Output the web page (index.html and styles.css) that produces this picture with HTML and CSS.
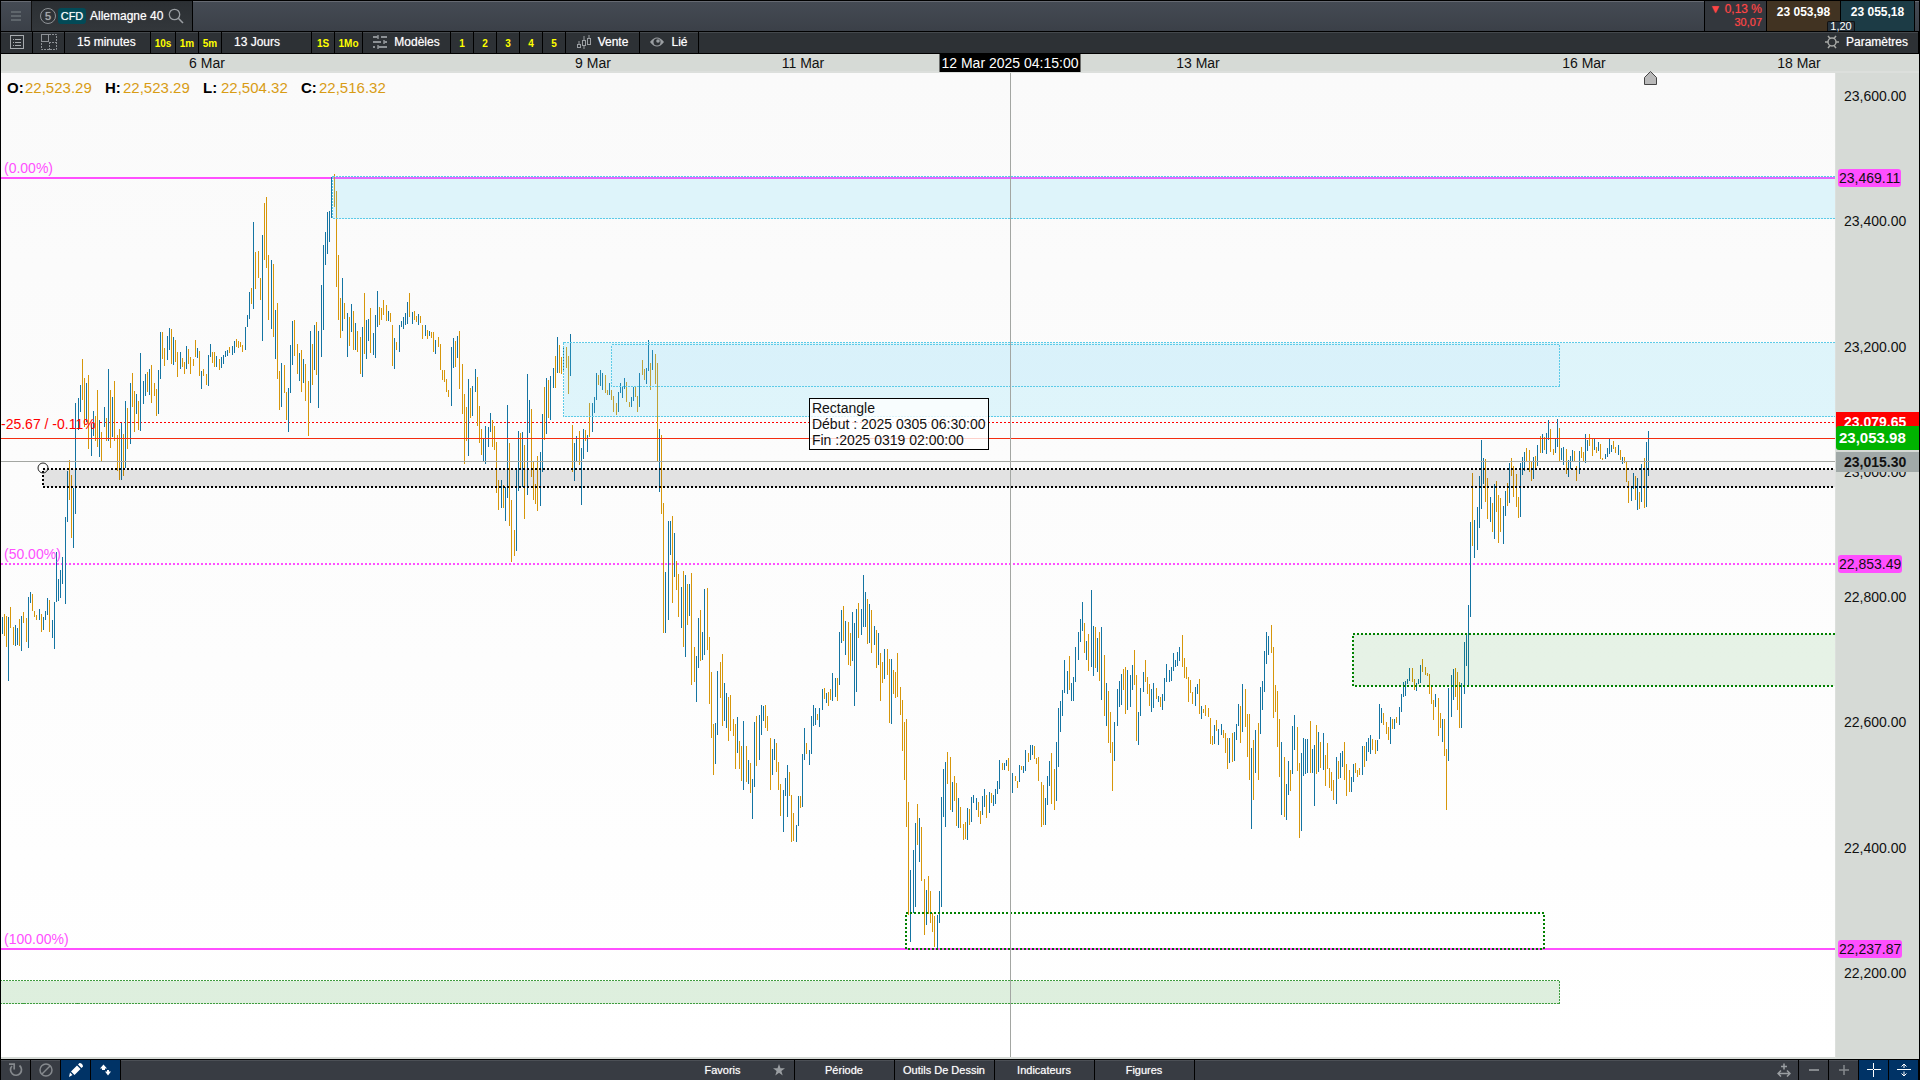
FILE: index.html
```html
<!DOCTYPE html>
<html lang="fr">
<head>
  <meta charset="UTF-8" />
  <meta name="viewport" content="width=device-width, initial-scale=1.0"/>
  <title>Allemagne 40</title>
  <link rel="stylesheet" href="styles.css">
</head>
<body>
  <div class="app">
    <header class="header">
      <button class="menu-btn" aria-label="Menu">
        <svg width="10" height="12" viewBox="0 0 10 12"><path d="M0 2h10M0 6h10M0 10h10" stroke="#5f666c" stroke-width="2"/></svg>
      </button>
      <div class="tab">
        <span class="tab-num">5</span>
        <span class="badge">CFD</span>
        <span class="tab-name">Allemagne 40</span>
        <button class="search-btn" aria-label="Rechercher">
          <svg width="16" height="16" viewBox="0 0 16 16" fill="none" stroke="#9a9ea2"><circle cx="6.500" cy="6.500" r="5.200" stroke-width="1.300"/><path d="M10.300 10.300L15 15" stroke-width="1.600"/></svg>
        </button>
      </div>
      <div class="header-space"></div>
      <div class="change">
        <span>▼ 0,13 %</span>
        <span class="change-pts">30,07</span>
      </div>
      <div class="quotes">
        <button class="quote sell">23 053,98</button>
        <button class="quote buy">23 055,18</button>
        <span class="spread">1,20</span>
      </div>
    </header>

    <nav class="toolbar">
      <button class="tool w-icon" aria-label="Liste">
        <svg width="14" height="14" viewBox="0 0 14 14" fill="none" stroke="#a7abae"><rect x=".5" y=".5" width="13" height="13"/><path d="M3 4.500h1M5 4.500h6M3 7.500h1M5 7.500h6M3 10.500h1M5 10.500h6"/></svg>
      </button>
      <button class="tool w-icon" aria-label="Grille">
        <svg width="16" height="16" viewBox="0 0 16 16" fill="none" stroke="#8d9195"><rect x=".5" y=".5" width="7" height="7"/><path d="M8 .5h7.500v15h-15V8M8.500 8v8M8 8.500h8" stroke-dasharray="2 1"/></svg>
      </button>
      <button class="tool w-unit">15 minutes</button>
      <button class="tool quick w-25">10s</button>
      <button class="tool quick">1m</button>
      <button class="tool quick">5m</button>
      <button class="tool w-range">13 Jours</button>
      <button class="tool quick">1S</button>
      <button class="tool quick w-28">1Mo</button>
      <button class="tool w-88">
        <svg width="14" height="14" viewBox="0 0 14 14" fill="none" stroke="#8d9195" stroke-width="2"><path d="M0 2h5M8 2h6M0 7h8M11 7h3M0 12h2M5 12h9"/><path d="M5 0v4M11 5v4M5 10v4" stroke-width="1.500"/></svg>
        Modèles
      </button>
      <button class="tool quick">1</button>
      <button class="tool quick">2</button>
      <button class="tool quick">3</button>
      <button class="tool quick">4</button>
      <button class="tool quick">5</button>
      <button class="tool w-74">
        <svg width="14" height="14" viewBox="0 0 14 14" fill="none" stroke="#9a9ea2"><rect x=".5" y="9.500" width="3" height="3"/><rect x="5.500" y="5.500" width="3" height="5"/><rect x="10.500" y="3.500" width="3" height="6"/><path d="M2 6v3M7 1v4M7 11v3M12 0v3"/></svg>
        Vente
      </button>
      <button class="tool w-59">
        <svg width="14" height="10" viewBox="0 0 14 10"><path d="M0 5Q7-4 14 5Q7 14 0 5Z" fill="#9a9ea2"/><circle cx="7" cy="5" r="3.500" fill="#2d3135"/><circle cx="8" cy="4" r="1.800" fill="#9a9ea2"/></svg>
        Lié
      </button>
      <div class="toolbar-space"></div>
      <button class="tool settings">
        <svg width="14" height="14" viewBox="0 0 14 14" fill="none" stroke="#a7a9a7" stroke-width="1.500"><circle cx="7" cy="7" r="4"/><path d="M11 7h3M9 10.500l2 2.600M5 10.500l-2 2.600M3 7H0M5 3.500L3 .9M9 3.500L11 .9"/></svg>
        Paramètres
      </button>
    </nav>

    <div class="date-axis" id="dateAxis"></div>

    <main class="chart">
      <div class="plot">
        <svg class="plot-svg" viewBox="1 73 1834 984" preserveAspectRatio="none">
          <path class="line fib" d="M1 178H1835M1 949H1835"/>
          <path class="line fib half" d="M1 564H1835"/>
          <path class="line prev" d="M100 422.500H1835"/>
          <path class="bar up" id="barsUp"/>
          <path class="bar down" id="barsDown"/>
          <path class="line last" d="M1 438.500H1835"/>

          <rect class="zone blue" x="332.500" y="176.500" width="1510" height="42"/>
          <rect class="zone blue" x="563.500" y="342.500" width="1280" height="74"/>
          <rect class="zone blue inner" x="611.500" y="344.500" width="948" height="42"/>
          <rect class="zone black" x="43" y="469" width="1800" height="18"/>
          <rect class="zone green" x="1353" y="634" width="490" height="52"/>
          <rect class="zone green empty" x="906" y="913" width="638" height="36"/>
          <rect class="zone green thin" x="-3.500" y="980.500" width="1563" height="23"/>

          <path class="line cross" d="M1 461.500H1835M1010.500 73V1057"/>
          <circle class="handle" cx="43" cy="468" r="5"/>
          <path class="marker" d="M1644.500 84.500V77.500L1650.500 71.500L1656.500 77.500V84.500Z"/>
        </svg>

        <dl class="ohlc">
          <dt>O:</dt><dd>22,523.29</dd>
          <dt>H:</dt><dd>22,523.29</dd>
          <dt>L:</dt><dd>22,504.32</dd>
          <dt>C:</dt><dd>22,516.32</dd>
        </dl>
        <div id="levelLabels"></div>
        <div class="tooltip">
          Rectangle<br>
          Début : 2025 0305 06:30:00<br>
          Fin :2025 0319 02:00:00
        </div>
      </div>
      <div class="price-axis" id="priceAxis"></div>
    </main>

    <footer class="footer">
      <button class="foot-btn" aria-label="Réinitialiser">
        <svg width="14" height="14" viewBox="0 0 14 14" fill="none" stroke="#85898d" stroke-width="1.700"><path d="M10.500 2.500A5.500 5.500 0 1 1 3 3"/><path d="M0 1.200h5.200V6.500" /></svg>
      </button>
      <button class="foot-btn" aria-label="Effacer">
        <svg width="14" height="14" viewBox="0 0 14 14" fill="none" stroke="#85898d" stroke-width="1.500"><circle cx="7" cy="7" r="6"/><path d="M3 11L11 3"/></svg>
      </button>
      <button class="foot-btn active" aria-label="Dessiner">
        <svg width="14" height="14" viewBox="0 0 14 14" fill="#fff"><path d="M0 14l1-4.500L3.500 12ZM2 8.500L8 2.500L11.500 6L5.500 12ZM9 1.500L10.500 0Q12 0 13 1T14 3.500L12.500 5Z"/></svg>
      </button>
      <button class="foot-btn active" aria-label="Monter ou descendre">
        <svg width="12" height="12" viewBox="0 0 12 12" fill="#fff"><path d="M0 4.500L3.500 .5L7 4.500H5V6H2V4.500ZM5 7.500H7V6H9V7.500H11L8 11.500Z"/></svg>
      </button>
      <div class="foot-tabs">
        <button class="foot-tab favorites">Favoris
          <svg width="12" height="12" viewBox="0 0 12 12" fill="#9a9ea2"><path d="M6 0L7.500 4.300H12L8.400 7L9.700 11.600L6 8.800L2.300 11.600L3.600 7L0 4.300H4.500Z"/></svg>
        </button>
        <button class="foot-tab">Période</button>
        <button class="foot-tab">Outils De Dessin</button>
        <button class="foot-tab">Indicateurs</button>
        <button class="foot-tab">Figures</button>
      </div>
      <button class="foot-btn" aria-label="Étendre">
        <svg width="14" height="14" viewBox="0 0 14 14" fill="none" stroke="#9a9ea2" stroke-width="1.500"><path d="M4 3.500h6M7 .5v6M1 10.500h12M4 7.500l-3 3l3 3M10 7.500l3 3l-3 3"/></svg>
      </button>
      <button class="foot-btn" aria-label="Zoom arrière">
        <svg width="10" height="10" viewBox="0 0 10 10"><path d="M0 5h10" stroke="#85898d" stroke-width="2"/></svg>
      </button>
      <button class="foot-btn" aria-label="Zoom avant">
        <svg width="10" height="10" viewBox="0 0 10 10"><path d="M0 5h10M5 0v10" stroke="#85898d" stroke-width="1.500"/></svg>
      </button>
      <button class="foot-btn active" aria-label="Réticule">
        <svg width="14" height="14" viewBox="0 0 14 14" stroke="#fff"><path d="M0 6.500h6M7 6.500h7M6.500 0v6M6.500 7v7"/></svg>
      </button>
      <button class="foot-btn active" aria-label="Échelle verticale">
        <svg width="14" height="14" viewBox="0 0 14 14" fill="none" stroke="#fff"><path d="M0 6.500h14M7 1v4M7 8.500v4M4.500 3.500L7 1l2.500 2.500M4.500 10.500L7 13l2.500-2.500"/></svg>
      </button>
    </footer>
  </div>
  <script src="script.js"></script>
</body>
</html>
```
FILE: styles.css
```css
body {
  margin: 0;
  background: #000;
  font-family: "Liberation Sans", Arial, sans-serif;
  font-size: 14px;
  color: #111;
}

button {
  margin: 0;
  padding: 0;
  border: none;
  background: none;
  color: inherit;
  font: inherit;
  cursor: pointer;
}

svg {
  display: block;
  flex: none;
}

.app {
  box-sizing: border-box;
  display: flex;
  flex-direction: column;
  height: 100vh;
  padding: 0 1px;
  overflow: hidden;
}

/* header */
.header {
  box-sizing: border-box;
  display: flex;
  height: 32px;
  border-top: 1px solid #000;
  border-bottom: 1px solid #000;
  background: linear-gradient(#454b54, #3b4048);
  box-shadow: inset 0 1px #666a72;
  font-size: 12px;
  color: #fff;
}

.menu-btn {
  display: flex;
  align-items: center;
  justify-content: center;
  width: 31px;
  border-right: 1px solid #111;
}

.tab {
  box-sizing: border-box;
  display: flex;
  align-items: center;
  gap: 4px;
  width: 161px;
  padding-left: 8px;
  border-right: 1px solid #000;
  background: linear-gradient(#2b2f33, #33373b);
  text-shadow: 0 0 1px rgba(255, 255, 255, 0.6);
}

.tab-num {
  box-sizing: border-box;
  width: 16px;
  height: 16px;
  margin-right: -2px;
  border: 1px solid #8f9397;
  border-radius: 50%;
  color: #a7abae;
  font-size: 11px;
  line-height: 14px;
  text-align: center;
}

.badge {
  width: 28px;
  border-radius: 3px;
  background: #024a57;
  font-size: 11px;
  line-height: 16px;
  text-align: center;
}

.search-btn {
  margin-left: 1px;
}

.header-space,
.toolbar-space {
  flex: 1;
}

.change {
  box-sizing: border-box;
  display: flex;
  flex-direction: column;
  align-items: flex-end;
  width: 63px;
  padding: 2px 4px 0 0;
  border-left: 1px solid #000;
  border-right: 1px solid #000;
  background: #33373d;
  color: #ff4545;
  line-height: 13px;
  text-shadow: 0 0 1px rgba(255, 69, 69, 0.6);
}

.change-pts {
  font-size: 11px;
}

.quotes {
  position: relative;
  display: flex;
  padding-right: 4px;
}

.quote {
  box-sizing: border-box;
  width: 74px;
  padding-bottom: 8px;
  border-right: 1px solid #000;
  color: #fff;
  font-weight: bold;
}

.sell {
  background: #413322;
}

.buy {
  background: #1c3b45;
}

.spread {
  position: absolute;
  left: 60px;
  bottom: 0;
  width: 26px;
  border: 1px solid #111;
  border-bottom: none;
  border-radius: 2px 2px 0 0;
  background: #26323c;
  font-size: 11px;
  line-height: 9px;
  text-align: center;
}

/* toolbar */
.toolbar {
  box-sizing: border-box;
  display: flex;
  height: 22px;
  border-bottom: 1px solid #000;
  background: #2d3135;
  box-shadow: inset 0 1px #44484c;
  font-size: 12px;
  color: #fff;
}

.tool {
  box-sizing: border-box;
  display: flex;
  align-items: center;
  justify-content: center;
  gap: 7px;
  width: 23px;
  padding-bottom: 1px;
  border-right: 1px solid #000;
  text-shadow: 0 0 1px rgba(255, 255, 255, 0.6);
  white-space: nowrap;
}

.quick {
  padding: 1px 0 0;
  color: #ff0;
  font-size: 10px;
  font-weight: bold;
  text-shadow: none;
}

.w-icon {
  width: 32px;
}

.w-unit,
.w-range {
  justify-content: flex-start;
  width: 86px;
  padding-left: 12px;
}

.w-range {
  width: 90px;
}

.w-25 {
  width: 25px;
}

.w-28 {
  width: 28px;
}

.w-59 {
  width: 59px;
}

.w-74 {
  width: 74px;
}

.w-88 {
  width: 88px;
}

.settings {
  width: auto;
  padding-right: 10px;
}

/* axes */
.date-axis {
  position: relative;
  height: 17px;
  border-bottom: 2px solid #dcdfdc;
  background: #d6dad6;
}

.date-axis span {
  position: absolute;
  line-height: 18px;
  white-space: nowrap;
  transform: translateX(-50%);
}

.date-axis .cursor-date {
  padding: 0 2px;
  background: #000;
  color: #fff;
}

.price-axis {
  position: relative;
  box-sizing: border-box;
  width: 84px;
  border-left: 1px solid #dcdfdc;
  border-bottom: 2px solid #d6dad6;
  background: #d6dad6;
  overflow: hidden;
}

.price-axis span {
  box-sizing: border-box;
  position: absolute;
  left: 0;
  width: 100%;
  padding-left: 8px;
  line-height: 18px;
  transform: translateY(-50%);
}

.price-axis .level {
  left: 2px;
  width: auto;
  padding: 0 1px;
  border-radius: 3px;
  background: #ff4fff;
}

.price-axis .cursor,
.price-axis .prev,
.price-axis .last {
  font-weight: bold;
  line-height: 20px;
  background: #a1a9a8;
}

.price-axis .prev {
  background: #f00;
  color: #fff;
}

.price-axis .last {
  padding-left: 3px;
  border-radius: 3px 0 0 3px;
  background: #00b300;
  color: #fff;
  font-size: 15px;
  line-height: 24px;
}

/* chart */
.chart {
  display: flex;
  flex: 1;
  min-height: 0;
  border-bottom: 1px solid #000;
}

.plot {
  position: relative;
  flex: 1;
  border-bottom: 2px solid #d6dad6;
  background: linear-gradient(#fafafa, #fff);
}

.plot-svg {
  position: absolute;
  width: 100%;
  height: 100%;
  overflow: visible;
  clip-path: inset(-3px 0 0 0);
}

.line,
.bar,
.zone {
  fill: none;
  stroke-width: 1;
  shape-rendering: crispEdges;
}

.up {
  stroke: #1474a2;
}

.down {
  stroke: #d6960a;
}

.fib {
  stroke: #ff4fff;
  stroke-width: 2;
}

.half {
  stroke-dasharray: 2 2;
}

.prev {
  stroke: #f00;
  stroke-dasharray: 2 2;
}

.last {
  stroke: #f32c10;
}

.cross {
  stroke: #a3a6a2;
}

.blue {
  fill: rgba(92, 216, 250, 0.18);
  stroke: #5ccbe8;
  stroke-dasharray: 2 1;
}

.inner {
  fill: rgba(90, 190, 255, 0.04);
}

.black {
  fill: rgba(0, 0, 0, 0.1);
  stroke: #000;
  stroke-width: 2;
  stroke-dasharray: 2 2;
}

.green {
  fill: rgba(0, 128, 0, 0.09);
  stroke: #008000;
  stroke-width: 2;
  stroke-dasharray: 2 2;
}

.empty {
  fill: none;
}

.thin {
  fill: rgba(0, 128, 0, 0.13);
  stroke: #3f9c3f;
  stroke-width: 1;
  stroke-dasharray: 2 1;
}

.handle {
  fill: none;
  stroke: #222;
}

.marker {
  fill: #b9b9b9;
  stroke: #444;
}

.ohlc {
  position: absolute;
  left: 6px;
  top: 6px;
  display: grid;
  grid-template-columns: repeat(4, 18px 80px);
  margin: 0;
  font-size: 15px;
  line-height: 18px;
}

.ohlc dt {
  color: #000;
  font-weight: bold;
}

.ohlc dd {
  margin: 0;
  color: #d89c14;
}

.level-label {
  position: absolute;
  left: 3px;
  color: #ff4fff;
  line-height: 20px;
  transform: translateY(-100%);
}

.level-label.diff {
  left: 0;
  color: #f00;
  transform: translateY(-50%);
}

.tooltip {
  position: absolute;
  left: 44%;
  top: 33%;
  margin-left: 1px;
  padding: 1px 2px;
  border: 1px solid #000;
  background: rgba(255, 255, 255, 0.78);
  line-height: 16px;
  white-space: nowrap;
}

/* footer */
.footer {
  box-sizing: border-box;
  display: flex;
  height: 20px;
  background: #383c43;
  box-shadow: inset 0 1px #4c5056;
  font-size: 11px;
  color: #fff;
}

.foot-btn {
  box-sizing: border-box;
  display: flex;
  align-items: center;
  justify-content: center;
  width: 30px;
  border-right: 1px solid #000;
}

.active {
  background: #003366;
}

.foot-tabs {
  display: flex;
  flex: 1;
  justify-content: center;
  padding-right: 46px;
}

.foot-tab {
  box-sizing: border-box;
  width: 100px;
  border-right: 1px solid #000;
  text-shadow: 0 0 1px rgba(255, 255, 255, 0.6);
}

.favorites {
  display: flex;
  align-items: center;
  justify-content: space-between;
  width: 145px;
  padding: 0 9px 0 55px;
}
```
FILE: script.js
```js
// plot limits, in chart units
const LEFT = 1, RIGHT = 1835, TOP = 73, BOTTOM = 1057;
const priceToY = p => 96 + (23600 - p) * 0.6264;
const pct = y => ((y - TOP) / (BOTTOM - TOP)) * 100 + '%';

// 15 minute bars by block: u = up, d = down, then x, high, low
const blocks = [
  { x: 0, y: 540, kx: 3, ky: 3, bars: `
u8 231 281,d14 222 288,d20 228 321,u26 231 423,d32 201 264,d41 261 315,u47 255 318,u53 264 315,d59 237 318,u65 228 333,
d71 216 249,d80 234 306,u86 171 324,u92 156 189,d98 162 213,d104 213 231,d110 225 240,u119 207 240,d125 222 276,u131 231 270,
u137 213 240,u143 174 225,d149 180 276,u158 240 294,u164 186 327,u170 36 186,u176 117 183,u182 90 174,u188 51 132` },
  { x: 0, y: 150, kx: 2.45, ky: 3, bars: `
u160 1100 1362,u165 962 1116,d170 930 1050,d175 975 1164,u180 1014 1194,u185 759 1092,u192 744 840,u197 705 786,d202 627 750,d207 684 831,
u212 699 816,d217 675 897,u224 822 918,u229 783 858,d234 798 873,d239 720 891,u244 810 921,d249 846 933,u256 771 831,d261 804 873,
u266 657 873,d271 720 894,u276 741 861,d281 693 873,d288 855 963,d293 837 990,u298 819 990,d303 852 978,u308 753 954,d313 774 897,
u320 699 882,d325 669 771,d330 723 846,u334 732 792,d339 753 840,u344 609 843,u351 693 762,u356 672 738,d361 666 726,u366 657 735,
d371 645 759,d378 699 738,d383 717 798,u388 660 792,u393 546 687,d398 546 627,d403 594 648,u410 558 630,u415 534 600,d420 537 642,
u425 561 645,d430 570 636,d435 606 681,u442 606 657,d447 624 651,d452 636 672,u457 588 657,d462 597 642,d467 621 672,d474 627 648,
d479 570 621,u484 594 624,d489 603 678,u494 663 717,d499 657 678,d506 672 705,u511 615 708,u516 582 621,d521 606 639,d526 606 651,
u530 618 651,d538 627 660,u543 621 654,u548 615 642,u553 603 621,u558 600 618,d562 591 609,u570 588 615,u575 573 609,d580 567 591,
d585 573 594,d589 576 591,d594 585 606,u601 531 600,u606 495 531,u611 426 507,d616 414 462,u621 216 477,d626 306 417,d633 303 384,
d638 384 450,u643 255 573,d648 159 330,d653 141 354,d658 315 510,u665 330 537,d670 342 561,u675 480 627,d680 459 687,d685 663 780,
u690 639 771,d697 645 729,d702 726 810,u707 714 846,u712 585 729,u717 513 645,d722 510 618,d729 582 672,u734 609 693,d739 600 726,
u744 627 699,d748 642 753,d756 693 858,u761 543 759,d766 582 705,u771 525 660,d776 516 675,u781 543 774,u788 405 621,u793 285 540,
u798 246 345,u803 186 312,u807 183 276,u812 80 205,d820 72 171,d825 123 411,d830 315 510,d834 444 564,u839 384 543,d844 459 507,
u852 489 621,d857 501 588,u861 462 546,d866 483 600,u871 519 600,d876 543 606,d883 561 672,u888 531 681,d893 429 612,u898 510 627,
u903 507 573,d908 474 609,u915 549 615,u920 495 624,u925 423 531,d930 471 525,d935 474 510,d940 450 495,d947 465 513,u952 483 513,
d957 489 516,d962 525 648,u967 564 657,d972 576 600,u979 525 606,u984 513 531,u989 501 537,u993 489 525,u998 456 522,d1003 429 501,
u1011 486 522,d1016 483 510,d1021 498 516,u1025 492 525,d1030 498 519,d1035 525 567,u1042 525 558,d1047 540 567,u1052 543 558,d1057 546 564,
d1062 546 606,u1067 570 612,d1074 561 591,d1079 582 660,d1084 660 690,d1089 660 696,d1094 687 726,d1099 720 741,u1106 591 768,u1111 564 654,
d1116 573 651,u1121 558 624,d1126 543 717,d1133 642 792,d1138 732 942,d1143 771 873,u1148 687 918,d1153 714 804,u1158 708 798,u1165 657 726,
d1170 681 828,d1175 768 879,d1180 837 915,u1185 864 936,u1189 828 942,u1197 831 891,u1202 789 846,d1207 810 891,d1212 828 900,d1217 876 1029,
d1221 990 1080,u1229 990 1074,d1234 1005 1074,u1239 1011 1113,u1244 765 1044,d1248 879 1128,d1253 1050 1236,d1261 1140 1218,u1266 957 1203,u1271 843 1023,
d1275 849 960,u1280 846 1011,d1285 885 1107,u1293 672 1035,u1297 750 849,d1302 777 981,d1307 936 1050,d1312 1002 1062,d1317 918 1083,u1324 906 1068,
u1329 792 966,d1334 711 870,u1339 684 852,d1344 690 804,u1349 678 810,u1356 654 714,d1361 618 714,u1366 561 669,d1371 585 669,d1376 621 672,u1381 591 660` },
  { x: 560, y: 320, kx: 2.45, ky: 2.904, bars: `
d16 78 139,d21 105 215,u26 41 163,d31 305 441,u36 357 467,u41 337 410,d48 322 421,u53 372 537,u58 317 404,d63 319 350,
u68 334 383,d72 241 340,u80 241 325,u85 224 270,u90 154 232,d95 160 189,u99 145 192,u104 154 203,d112 160 212,d117 203 218,
u121 183 218,d126 203 232,d131 221 267,d139 241 276,u144 209 267,u148 183 212,u153 192 226,u158 168 200,d163 180 238,d170 238 253,
u175 224 253,u180 195 235,d185 192 224,d190 221 267,u195 154 253,d202 116 160,d207 142 174,u212 139 186,u217 58 148,d222 125 203,
u227 87 145,d234 99 186,d239 125 410,u244 317 499,d249 334 563,d254 531 909,u259 732 909,u266 584 871,u271 584 682,d276 569 822,
u281 618 746,d286 700 784,d291 738 862,u298 775 894,d303 729 950,u308 740 979,d313 767 886,u318 767 859,d322 735 1060,d330 950 1051,
u335 976 1109,u340 865 1010,d344 842 990,u349 906 987,u354 781 973,d362 778 958,d366 920 1115,d371 1022 1214,d376 1173 1321,u381 1170 1289,
u386 1019 1205,d393 993 1098,d398 970 1179,u403 1054 1164,u408 1083 1185,d413 1095 1222,d418 1089 1193,d425 1159 1208,d430 1173 1304,u435 1153 1257,
d440 1222 1304,d445 1237 1339,u450 1164 1365,d457 1237 1342,u462 1278 1347,d467 1286 1373,u472 1333 1449,u477 1167 1356,d481 1150 1295,u489 1147 1278,
u494 1118 1205,u499 1121 1164,d503 1118 1185,d508 1150 1193,d516 1214 1365,u521 1246 1321,u526 1217 1278,d530 1228 1312,d535 1283 1365,d540 1347 1440,
u548 1365 1487,u553 1330 1382,u557 1292 1443,d562 1312 1382,d567 1379 1516,d572 1432 1513,u579 1466 1516,u584 1382 1469,d589 1382 1417,u594 1260 1414,
u599 1185 1278,d604 1228 1260,u611 1249 1292,u616 1150 1260,u621 1118 1179,u626 1127 1176,d631 1144 1161,u636 1127 1182,u643 1071 1132,d648 1069 1101,
u653 1083 1112,d658 1080 1121,d662 1071 1103,u667 1025 1106,u675 1040 1095,d680 1040 1106,u685 906 1060,u689 842 938,d694 830 932,u699 874 973,
d707 877 1002,d711 909 1005,u716 848 990,u721 880 1121,u726 839 1080,d731 822 923,u738 839 915,u743 740 891,u748 790 891,d753 810 941,
u758 825 938,d763 842 967,u770 889 944,d775 900 1010,u780 909 1002,d785 967 1106,d790 993 1054,u795 955 1042,d802 955 1031,d807 984 1170,
u812 984 1173,d817 1016 1086,d822 1022 1098,d827 967 1095,d834 1066 1147,d839 1103 1251,d844 1167 1336,d849 1159 1472` },
  { x: 880, y: 560, kx: 2.45, ky: 3, bars: `
d70 726 1065,u74 930 1146,u82 870 1059,u87 789 1041,d92 732 855,u97 774 906,d101 801 963,d109 957 1125,u114 990 1095,d119 948 1062,
d123 993 1089,d128 1059 1116,d133 1068 1161,u141 1065 1164,u146 993 1089,u150 711 1041,u155 627 771,u160 606 801,d165 576 672,d173 591 750,
u178 666 756,d182 648 723,d187 669 798,u192 714 804,d197 741 804,d204 792 840,d209 786 837,u214 744 840,d219 747 795,u224 711 786,
u229 705 729,u236 714 750,d241 726 771,d246 753 792,u251 708 765,u256 687 741,d261 705 774,u268 696 759,d273 699 729,u278 705 738,
u283 687 732,u288 663 702,u293 600 687,d300 609 630,u305 609 630,u310 600 618,d315 594 633,u324 639 699,d332 648 663,d337 663 684,
u342 615 666,d347 618 630,u351 618 639,u356 570 633,d364 579 606,u369 555 600,u373 555 585,d378 558 597,d383 594 612,d388 591 663,
d396 666 801,d401 675 795,u405 714 795,u410 648 735,u415 603 678,d420 579 732,d427 627 750,u432 546 723,u437 444 621,u442 423 516,
u447 390 468,u452 300 399,u459 333 402,d464 288 390,u469 369 423,u474 351 423,u479 261 366,u486 216 300,u491 177 246,u496 126 213,
d501 189 279,u506 243 300,d511 222 333,u518 90 321,u523 198 348,d528 201 324,u533 234 336,d538 216 363,u542 201 420,d550 285 468,
u555 369 498,d560 393 549,d564 456 579,d569 546 693,u574 486 603,u582 387 498,u587 363 441,u591 342 435,d596 327 390,d601 321 462,
u606 330 450,u613 345 441,u618 315 390,d623 270 375,d628 345 543,u633 456 555,u638 384 468,u645 336 396,d650 300 366,d655 351 402,
d660 372 438,u665 387 456,u670 369 444,d677 384 417,u682 408 426,d687 411 441,u692 402 450,u697 354 423,u702 312 366,u709 330 366,
u714 321 363,u719 279 333,u724 300 321,u729 276 318,u734 261 303,d741 225 321,d746 294 354,d751 321 357,d756 351 426,d760 360 399,
d765 396 432,u773 381 438,u778 372 402,d783 357 462,u787 438 477,d792 447 459,d797 435 468,d805 444 471,d809 474 552,d814 528 555,
u819 495 552,d824 480 513,u829 507 555,u836 492 525,d841 510 534,d846 519 579,d851 534 627,u856 534 609,d863 519 606,u868 516 603,
u873 492 540,u878 432 498,d883 438 549,u888 372 516,d895 387 501,d900 462 591,d905 462 660,u910 564 807,d915 540 720,u920 510 639,
d927 489 660,u932 381 522,u937 363 450,u942 273 396,u947 216 312,u952 228 285,d959 195 279,d964 261 474,d969 375 456,d974 393 561,
d979 477 651,u983 546 765,d991 591 771,u996 672 780,u1001 603 705,d1005 630 693,u1010 498 642,u1015 465 570,d1023 501 633,d1028 609 834,
u1032 579 813,u1037 534 648,u1042 537 642,u1047 537 639,d1054 483 639,u1059 567 639,u1064 555 738,d1069 495 642,u1074 516 636,d1079 546 624,
u1086 519 630,d1091 585 678,d1096 549 627,d1101 624 684,d1106 636 693,d1111 660 720,u1118 591 732,d1123 603 657,u1128 579 654,u1133 573 621,
d1138 546 660,d1143 612 708,d1150 630 696,u1155 651 696,u1160 612 666,d1165 609 639,d1170 630 651,d1175 624 645,u1182 558 645,d1187 558 621,
u1192 546 603,u1197 534 576,u1202 525 582,d1207 537 570,d1214 540 582,u1219 540 573,u1224 432 537,u1228 444 489,d1233 459 495,d1241 486 522,
d1246 501 540,u1250 471 552,d1255 477 507,u1260 477 507,d1265 471 489,u1273 441 495,u1277 402 456,u1282 366 411,u1287 363 408,u1292 357 372,
u1297 324 363,d1304 324 366,d1309 357 390,u1314 369 393,u1319 357 372,u1324 315 369,d1329 297 336,d1336 321 345,d1341 339 348,d1346 342 402,
d1351 375 432,d1356 420 480,u1361 402 441,d1368 414 528,d1373 459 504,u1378 477 546,d1383 477 588,d1388 567 750,u1393 384 603,u1400 345 471,
u1405 327 420,d1410 324 411,d1415 336 450,d1420 366 504,u1424 369 504,u1432 246 402,u1437 222 318,u1442 135 375,u1446 -114 171` },
  { x: 1340, y: 400, kx: 2.703, ky: 3, bars: `
d358 219 438,u363 360 474,u371 321 450,u377 228 384,u382 120 327,u388 174 252,d393 177 306,d398 234 357,u407 291 366,d412 309 396,
u417 252 417,d423 243 336,d428 285 429,d434 294 396,u442 318 432,u447 273 348,d452 249 318,u458 189 309,d463 174 228,d469 198 291,
d477 222 321,d482 291 354,u488 189 351,u493 171 225,u498 156 213,d504 144 183,d512 150 216,d517 186 243,u523 171 237,d528 168 204,
u534 135 198,d542 108 159,u547 102 159,d553 111 150,u558 99 162,u563 60 120,d569 87 156,d577 147 165,u582 117 159,u588 57 141,
d593 84 183,u598 144 180,u604 141 195,d612 147 222,u617 180 231,u623 168 207,u628 150 183,d634 153 183,d639 198 243,u647 153 222,
d653 141 174,d658 156 186,u663 102 189,u669 120 153,d674 102 138,d682 117 168,u688 114 150,d693 141 159,u698 126 153,d704 132 177,
d709 174 180,u717 162 177,u723 144 171,u728 117 162,u734 135 156,d739 123 147,d744 141 159,u753 135 165,d758 150 180,u763 171 192,
d769 171 189,d774 186 246,d780 243 309,u788 258 303,u793 219 267,d798 228 300,u804 234 330,d809 276 327,u815 192 306,d823 174 324,
u828 126 321,u834 93 228` }
];

const paths = { u: '', d: '' };
blocks.forEach(b => {
  b.bars.trim().split(/,\s*/).forEach(bar => {
    const [x, high, low] = bar.slice(1).split(' ').map(Number);
    const px = Math.floor(b.x + x / b.kx) + 0.5;
    const y1 = Math.round(b.y + high / b.ky);
    const y2 = Math.round(b.y + low / b.ky);
    paths[bar[0]] += `M${px} ${y1}V${y2}`;
  });
});
document.getElementById('barsUp').setAttribute('d', paths.u);
document.getElementById('barsDown').setAttribute('d', paths.d);

function addLabel(parent, text, className, side, value) {
  const el = document.createElement('span');
  el.textContent = text;
  el.className = className;
  el.style[side] = value;
  document.getElementById(parent).appendChild(el);
}

// price axis
const format = p => p.toLocaleString('en-US', { minimumFractionDigits: 2 });
for (let p = 23600; p >= 22200; p -= 200) {
  addLabel('priceAxis', format(p), '', 'top', pct(priceToY(p)));
}
[23469.11, 22853.49, 22237.87].forEach(p => {
  addLabel('priceAxis', format(p), 'level', 'top', pct(priceToY(p)));
});
addLabel('priceAxis', '23,079.65', 'prev', 'top', pct(priceToY(23079.65)));
addLabel('priceAxis', '23,015.30', 'cursor', 'top', pct(priceToY(23015.3)));
addLabel('priceAxis', '23,053.98', 'last', 'top', pct(priceToY(23053.98)));

// retracement labels
addLabel('levelLabels', '(0.00%)', 'level-label', 'top', pct(178));
addLabel('levelLabels', '(50.00%)', 'level-label', 'top', pct(564));
addLabel('levelLabels', '(100.00%)', 'level-label', 'top', pct(949));
addLabel('levelLabels', '-25.67 / -0.11%', 'level-label diff', 'top', pct(424));

// date axis
const dates = [['6 Mar', 207], ['9 Mar', 593], ['11 Mar', 803], ['13 Mar', 1198], ['16 Mar', 1584], ['18 Mar', 1799]];
dates.forEach(([text, x]) => addLabel('dateAxis', text, '', 'left', (x - LEFT) / 1918 * 100 + '%'));
addLabel('dateAxis', '12 Mar 2025 04:15:00', 'cursor-date', 'left', (1010 - LEFT) / 1918 * 100 + '%');
```
